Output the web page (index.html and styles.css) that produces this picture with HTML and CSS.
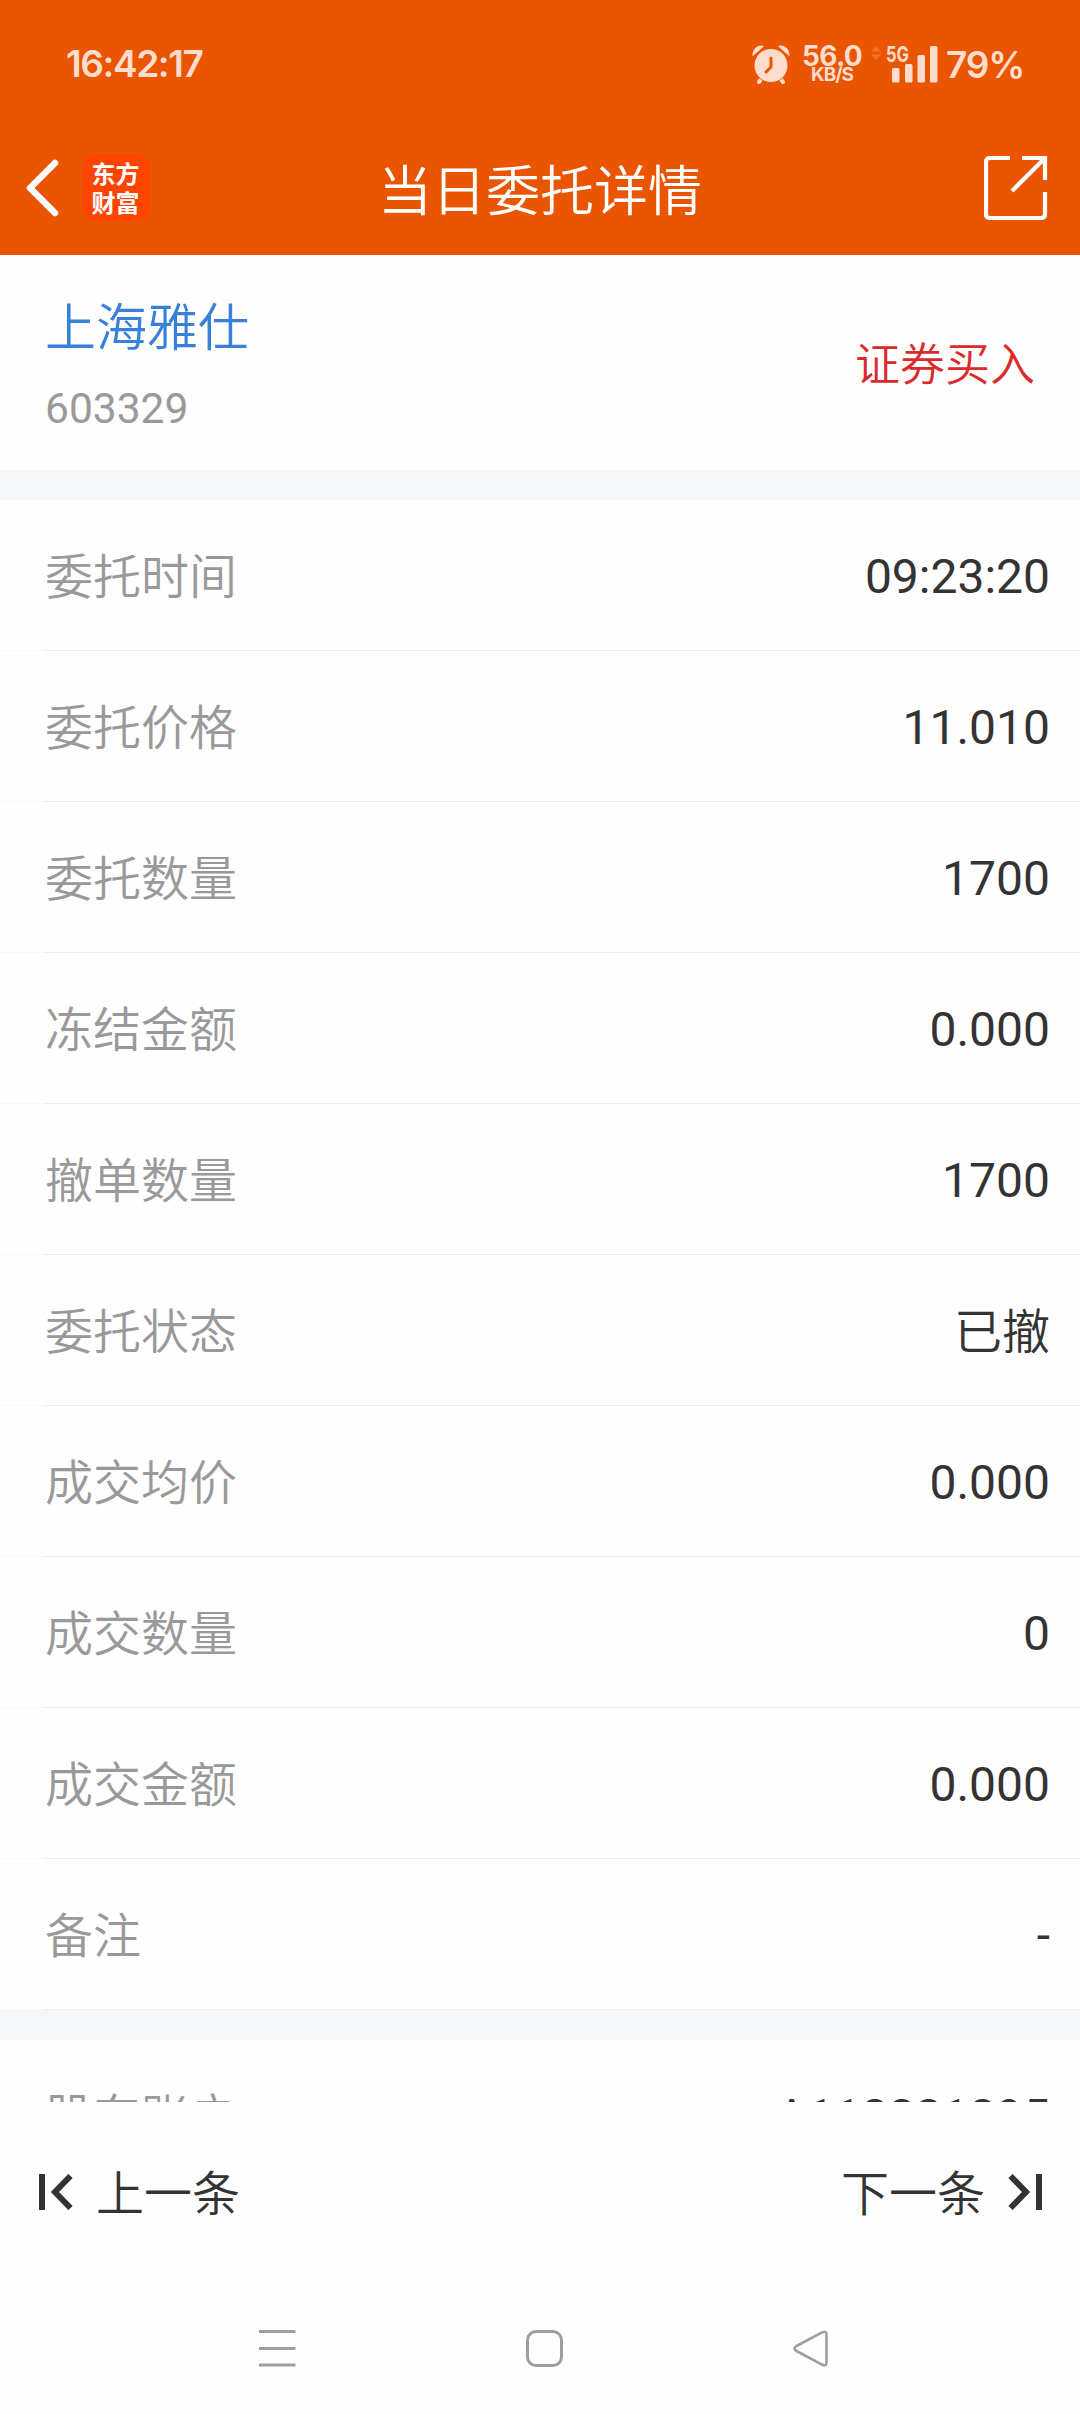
FILE: index.html
```html
<!DOCTYPE html>
<html lang="zh-CN">
<head>
<meta charset="utf-8">
<title>当日委托详情</title>
<link rel="stylesheet" href="styles.css">
</head>
<body>
<div class="screen">
  <header class="top">
    <div class="status">
      <span class="clock">16:42:17</span>
      <div class="indicators">
        <svg class="alarm" width="38" height="39" viewBox="0 0 38 39">
          <path class="fill" d="M.6 11.2C-.2 4.6 6-1.4 12 1.2zM37.4 11.2C38.2 4.6 32-1.4 26 1.2z"/>
          <path class="legs" d="M10 33l-3 4M28 33l3 4"/>
          <circle class="fill" cx="19" cy="20.5" r="17"/>
          <path class="hands" d="M19 13v9l-5 5"/>
        </svg>
        <div class="speed"><span class="rate">56.0</span><span class="unit">KB/S</span></div>
        <svg class="signal" width="68" height="38" viewBox="0 0 68 38">
          <path class="arrows" d="M0 6.5l5-5.5 5 5.5zM0 9.5h10l-5 5.5z"/>
          <text x="15" y="16.500" textLength="23" lengthAdjust="spacingAndGlyphs">5G</text>
          <rect x="21" y="23" width="7.500" height="14.500" rx="1.500"/>
          <rect x="34" y="19" width="7.500" height="18.500" rx="1.500"/>
          <rect x="46.500" y="10" width="7.500" height="27.500" rx="1.500"/>
          <rect x="59" y="1" width="7.500" height="36.500" rx="1.500"/>
        </svg>
        <span class="battery">79%</span>
      </div>
    </div>
    <div class="titlebar">
      <div class="side">
        <svg class="back" width="34" height="58" viewBox="0 0 34 58"><path d="M29 4L4 29l25 25"/></svg>
        <div class="logo"><span>东方</span><span>财富</span></div>
      </div>
      <h1>当日委托详情</h1>
      <div class="side end">
        <svg class="share" width="64" height="64" viewBox="0 0 64 64"><path d="M26 2H6Q2 2 2 6V58Q2 62 6 62H57Q61 62 61 58V36M38 2H61V24M61 2L28 35"/></svg>
      </div>
    </div>
  </header>
  <main class="content">
    <section class="stock">
      <div><div class="name">上海雅仕</div><div class="code">603329</div></div>
      <div class="action">证券买入</div>
    </section>
    <div class="gap"></div>
    <dl class="rows">
      <div class="row"><dt>委托时间</dt><dd>09:23:20</dd></div>
      <div class="row"><dt>委托价格</dt><dd>11.010</dd></div>
      <div class="row"><dt>委托数量</dt><dd>1700</dd></div>
      <div class="row"><dt>冻结金额</dt><dd>0.000</dd></div>
      <div class="row"><dt>撤单数量</dt><dd>1700</dd></div>
      <div class="row"><dt>委托状态</dt><dd class="word">已撤</dd></div>
      <div class="row"><dt>成交均价</dt><dd>0.000</dd></div>
      <div class="row"><dt>成交数量</dt><dd>0</dd></div>
      <div class="row"><dt>成交金额</dt><dd>0.000</dd></div>
      <div class="row"><dt>备注</dt><dd>-</dd></div>
    </dl>
    <div class="gap"></div>
    <dl class="rows">
      <div class="row"><dt>股东账户</dt><dd>A118881895</dd></div>
    </dl>
  </main>
  <footer class="pager">
    <div class="step"><svg width="34" height="36" viewBox="0 0 34 36"><path d="M3 0v36M31.500 2L16 18l15.500 16"/></svg><span>上一条</span></div>
    <div class="step"><span>下一条</span><svg width="34" height="36" viewBox="0 0 34 36"><path d="M31 0v36M2.500 2L18 18 2.500 34"/></svg></div>
  </footer>
  <nav class="system">
    <svg width="37" height="37" viewBox="0 0 37 37"><path d="M0 1.500h36.500M0 18.500h36.500M0 35h36.500"/></svg>
    <svg width="37" height="37" viewBox="0 0 37 37"><rect x="1.500" y="1.500" width="34" height="34" rx="8.500"/></svg>
    <svg width="37" height="37" viewBox="0 0 37 37"><path class="thin" d="M3.500 16L29.500 2.200Q33.500.8 33.500 4.500V32.500Q33.500 36.500 29.500 34.800L3.500 21Q-.5 18.500 3.500 16Z"/></svg>
  </nav>
</div>
</body>
</html>
```

FILE: styles.css
```css
* { box-sizing: border-box; margin: 0; padding: 0; }
body {
  background: #fefefe;
  color: #333;
  font-family: Roboto, "Noto Sans CJK SC", sans-serif;
  font-size: 48px;
}
svg { display: block; flex: none; }
.screen { width: 1080px; height: 2414px; display: flex; flex-direction: column; overflow: hidden; }

.top { height: 255px; background: #ea5502; color: #fff; flex: none; }
.status {
  height: 128px;
  display: flex;
  justify-content: space-between;
  align-items: center;
  padding: 0 57px 0 66px;
  color: #ffdccb;
  font-family: Inter, sans-serif;
  font-weight: 600;
}
.clock { font-size: 37px; letter-spacing: -1.4px; padding-bottom: 2px; }
.indicators { display: flex; align-items: center; }
.alarm .fill { fill: #ffdccb; }
.alarm circle { stroke: #ea5502; stroke-width: 1; }
.alarm .legs { fill: none; stroke: #ffdccb; stroke-width: 4; stroke-linecap: round; }
.alarm .hands { fill: none; stroke: #ea5502; stroke-width: 3; stroke-linecap: round; stroke-linejoin: round; }
.speed { width: 60px; margin: 0 9px 0 12px; display: flex; flex-direction: column; align-items: center; font-weight: 700; }
.rate { font-size: 28px; line-height: 22px; letter-spacing: -.6px; }
.unit { font-size: 19px; line-height: 16px; letter-spacing: -1px; }
.signal { fill: #ffdccb; overflow: visible; }
.signal text { font: 700 22px Inter, sans-serif; }
.signal .arrows { fill: #f5702a; }
.battery { font-size: 37px; width: 77px; margin-left: 7px; letter-spacing: -1.2px; white-space: nowrap; }

.titlebar { height: 120px; padding: 0 32px 0 26px; display: grid; grid-template-columns: 180px 1fr 174px; align-items: center; }
.side { display: flex; align-items: center; padding-bottom: 1px; }
.side.end { justify-content: flex-end; }
.back { fill: none; stroke: #fff; stroke-width: 6.500; stroke-linecap: round; stroke-linejoin: round; }
.logo {
  width: 67px;
  height: 67px;
  margin-left: 23px;
  padding: 0 2px 2px 0;
  border-radius: 14px;
  background: #ff4400;
  display: flex;
  flex-direction: column;
  justify-content: center;
  align-items: center;
  font: 700 24px/29px "Noto Sans CJK SC", sans-serif;
}
h1 { font-size: 54px; font-weight: 350; line-height: 72px; padding-top: 10px; text-align: center; white-space: nowrap; }
.share { fill: none; stroke: #fff; stroke-width: 4.200; }

.content { height: 1847px; overflow: hidden; flex: none; }
.stock { height: 215px; padding: 11px 45px 0; display: flex; justify-content: space-between; align-items: center; }
.name { color: #3880d8; font-size: 51px; font-weight: 350; line-height: 80px; }
.code { color: #999; font-size: 42.500px; line-height: 79px; }
.action { color: #dc2a2c; font-size: 45px; font-weight: 350; line-height: 64px; padding-bottom: 4px; }
.gap { height: 30px; background: #f6f7fa; }
.row {
  height: 151px;
  padding: 0 30px 0 45px;
  display: flex;
  justify-content: space-between;
  align-items: center;
  background: linear-gradient(90deg, #f8f8f8 45px, #ececec 45px) bottom / 100% 1px no-repeat;
}
dt { color: #999; font-weight: 350; padding-bottom: 5px; }
dd { padding-top: 2px; }
.word { font-weight: 350; padding: 0 0 5px; }
.pager { height: 180px; padding: 0 38px 0 39px; display: flex; justify-content: space-between; align-items: center; font-weight: 350; flex: none; }
.step { display: flex; align-items: center; gap: 23px; }
.step span { padding-bottom: 5px; }
.step svg { fill: none; stroke: #333; stroke-width: 6; }
.system { display: flex; flex: 1; justify-content: space-between; padding: 48px 250px 0 259px; }
.system svg { fill: none; stroke: #9e9e9e; stroke-width: 3; }
.system .thin { stroke-width: 2.600; }
```
